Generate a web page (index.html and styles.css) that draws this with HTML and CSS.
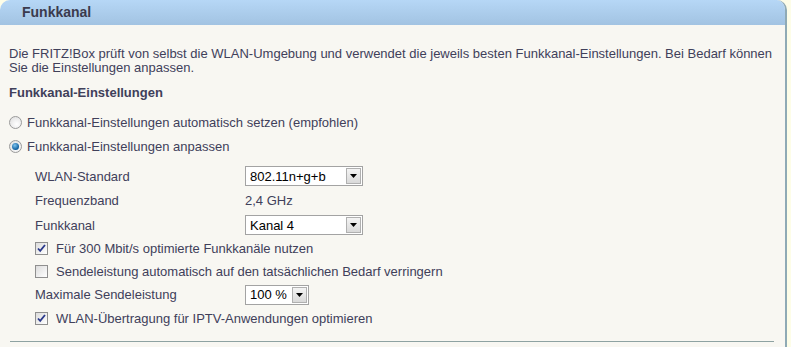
FILE: index.html
```html
<!DOCTYPE html>
<html>

<head>
  <meta charset="UTF-8">
  <title>Funkkanal</title>
  <link rel="stylesheet" href="styles.css">
</head>

<body>

  <div class="panel">
    <div class="head">Funkkanal</div>
    <div class="content">
      <p class="intro">Die FRITZ!Box prüft von selbst die WLAN-Umgebung und verwendet die jeweils besten Funkkanal-Einstellungen. Bei Bedarf können Sie die Einstellungen anpassen.</p>
      <h4>Funkkanal-Einstellungen</h4>

      <div class="options">
        <div class="option">
          <span class="radio"></span>
          <span>Funkkanal-Einstellungen automatisch setzen (empfohlen)</span>
        </div>
        <div class="option">
          <span class="radio on"></span>
          <span>Funkkanal-Einstellungen anpassen</span>
        </div>
      </div>

      <div class="settings">
        <div class="row">
          <span class="label">WLAN-Standard</span>
          <div class="select wide">
            <span class="value">802.11n+g+b</span>
            <span class="arrow"><svg width="7" height="4" viewBox="0 0 7 4"><path d="M0 0h7L3.5 4z" fill="#000"/></svg></span>
          </div>
        </div>
        <div class="row">
          <span class="label">Frequenzband</span>
          <span>2,4 GHz</span>
        </div>
        <div class="row">
          <span class="label">Funkkanal</span>
          <div class="select wide">
            <span class="value">Kanal 4</span>
            <span class="arrow"><svg width="7" height="4" viewBox="0 0 7 4"><path d="M0 0h7L3.5 4z" fill="#000"/></svg></span>
          </div>
        </div>
        <div class="row check-row">
          <span class="box"><svg width="11" height="11" viewBox="0 0 11 11"><path d="M2 5.5l2.2 2.4L9 2" fill="none" stroke="#2b3a8c" stroke-width="1.8"/></svg></span>
          <span>Für 300 Mbit/s optimierte Funkkanäle nutzen</span>
        </div>
        <div class="row check-row">
          <span class="box"></span>
          <span>Sendeleistung automatisch auf den tatsächlichen Bedarf verringern</span>
        </div>
        <div class="row">
          <span class="label">Maximale Sendeleistung</span>
          <div class="select small">
            <span class="value">100 %</span>
            <span class="arrow"><svg width="7" height="4" viewBox="0 0 7 4"><path d="M0 0h7L3.5 4z" fill="#000"/></svg></span>
          </div>
        </div>
        <div class="row check-row">
          <span class="box"><svg width="11" height="11" viewBox="0 0 11 11"><path d="M2 5.5l2.2 2.4L9 2" fill="none" stroke="#2b3a8c" stroke-width="1.8"/></svg></span>
          <span>WLAN-Übertragung für IPTV-Anwendungen optimieren</span>
        </div>
      </div>

      <div class="rule"></div>
    </div>
  </div>

</body>

</html>
```

FILE: styles.css
```css
body {
  font-family: "Liberation Sans", Arial, sans-serif;
  font-size: 13px;
  color: #40405a;
  background-color: #fdfde8;
  margin: 0;
}

.panel {
  width: 785px;
  height: 347px;
  background-color: #f8f7f2;
  border-right: 2px solid #8faab5;
  border-radius: 10px 10px 0 0;
  overflow: hidden;
}

.head {
  height: 25px;
  line-height: 25px;
  padding-left: 22px;
  font-size: 14px;
  font-weight: bold;
  color: #3b3b4d;
  background: linear-gradient(#b6d7f6, #a2c3e2);
}

.content {
  padding: 0 9px 0 9px;
}

.intro {
  margin: 22px 0 0 0;
  line-height: 14px;
}

h4 {
  margin: 10px 0 0 0;
  font-size: 13px;
  line-height: 15px;
}

.options {
  margin-top: 10px;
}

.option {
  display: flex;
  align-items: center;
  gap: 5px;
  height: 24px;
}

.radio {
  width: 11px;
  height: 11px;
  border: 1px solid #9a9a9a;
  border-radius: 50%;
  background: radial-gradient(circle at 60% 65%, #ffffff, #dcdcdc);
  display: flex;
  align-items: center;
  justify-content: center;
}

.radio.on::after {
  content: "";
  width: 7px;
  height: 7px;
  border-radius: 50%;
  background: radial-gradient(circle at 40% 35%, #7ec4f0, #0d5d9c 70%);
}

.settings {
  padding-left: 26px;
  margin-top: 6px;
}

.row {
  display: flex;
  align-items: center;
  height: 24.5px;
}

.label {
  width: 210px;
  flex: none;
}

.check-row {
  gap: 8px;
  height: 22.5px;
}

.box {
  width: 11px;
  height: 11px;
  border: 1px solid #8f8f8f;
  background: linear-gradient(135deg, #dcdcdc, #ffffff);
  display: flex;
  align-items: center;
  justify-content: center;
}

.select {
  display: flex;
  align-items: center;
  height: 18px;
  border: 1px solid #a3a3a3;
  background-color: #fff;
  color: #000;
}

.select.wide {
  width: 116px;
}

.select.small {
  width: 62px;
}

.value {
  flex: 1;
  padding-left: 4px;
  font-size: 13px;
}

.arrow {
  width: 13px;
  height: 14px;
  margin-right: 1px;
  border: 1px solid #b0b0b0;
  background: linear-gradient(#f4f4f4, #d9d9d9);
  display: flex;
  align-items: center;
  justify-content: center;
}

.rule {
  height: 1px;
  background-color: #8ea2a2;
  margin: 11px 2px 0 1px;
}
```
